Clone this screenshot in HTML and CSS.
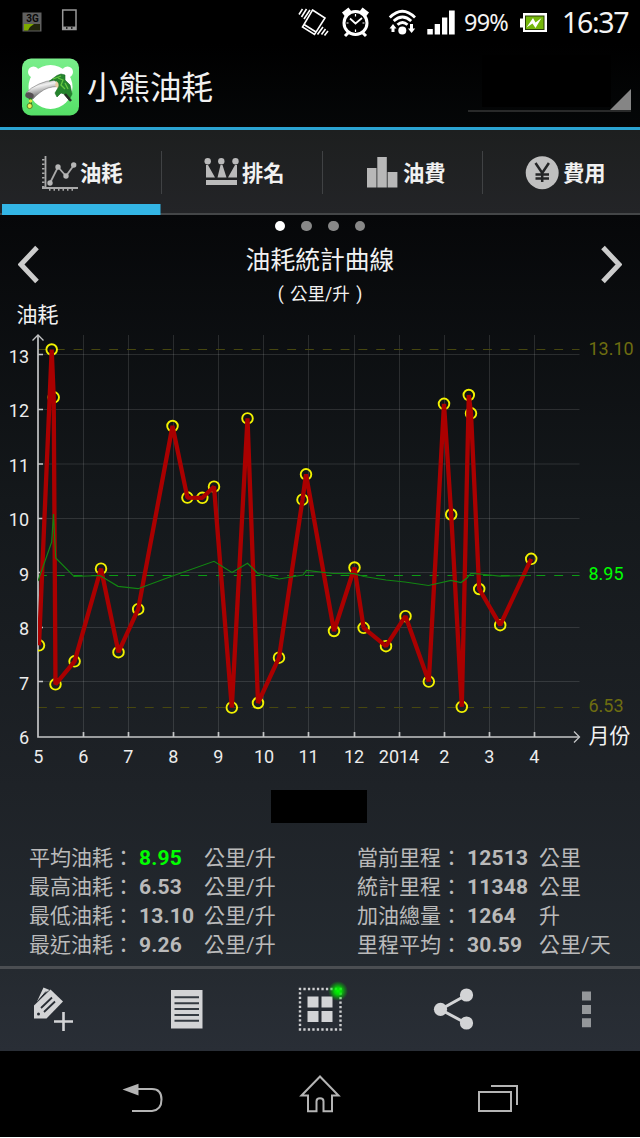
FILE: index.html
```html
<!DOCTYPE html>
<html lang="zh-Hant">
<head>
<meta charset="utf-8">
<title>小熊油耗</title>
<link rel="stylesheet" href="styles.css">
</head>
<body>
<div class="phone">
  <header class="status">
    <svg class="status-left" width="80" height="44" viewBox="0 0 80 44">
      <rect x="22.500" y="12.500" width="19" height="19" fill="#606060"/>
      <rect x="24" y="24" width="16" height="6.500" fill="#20240c"/>
      <path d="M24 24h10l-4 3-2 3.500h-4z" fill="#7da800"/>
      <text x="32.500" y="22" class="tiny">3G</text>
      <rect x="62.700" y="10" width="13.300" height="19.500" fill="none" stroke="#989898" stroke-width="1.500"/>
      <path d="M62.700 27.800h13.300" stroke="#989898" stroke-width="2.500"/>
      <path d="M66 28h1.500M71 28h1.500" stroke="#000" stroke-width="1.500"/>
    </svg>
    <div class="status-right">
      <svg width="158" height="44" viewBox="298 0 158 44">
        <g fill="none" stroke="#fff" stroke-width="1.600">
          <path d="M312.500 10 325 18 314.500 34.500 302.500 27zM304 24.500 316 32"/>
          <path d="M299 14.500 302.500 9M301.500 17 306.500 9M304 19 310 10M317.500 34.500 323 27M321.500 34.500 325.500 29M324.500 35.500 328 31"/>
        </g>
        <g fill="none" stroke="#fff">
          <circle cx="355.500" cy="23" r="11.500" stroke-width="3"/>
          <path d="M343.500 14.500 350 9.500M367.500 14.500 361 9.500" stroke-width="5"/>
          <path d="m348 33-3 3M363 33l3 3" stroke-width="3"/>
          <path d="M350 18.500l5.500 5 6.500-5.500" stroke-width="1.700"/>
          <path d="M355.500 14v2.500M355.500 29.500V32M346.500 23h2M362.500 23h2" stroke-width="1.200"/>
        </g>
        <g fill="none" stroke="#fff" stroke-width="2.800">
          <path d="M389.800 17.500q12.500-12.500 25.200 0M393.700 21q8.700-8 17.500 0M397.500 24.800q5-4.500 10 0"/>
        </g>
        <g fill="#fff">
          <circle cx="402.300" cy="30.500" r="4"/>
          <path d="M389.500 28.500 393 24l3.500 4.500h-2V32h-3v-3.500zM408 28.500h2V24h3v4.500h2.200l-3.600 4.500z"/>
          <path d="M427.300 29h5.500v5.500h-5.500zM434.700 24h5.300v10.500h-5.300zM442 17.500h5.300v17H442zM449 10.500h5.700v24H449z"/>
        </g>
      </svg>
      <span class="percent">99%</span>
      <svg width="28" height="44" viewBox="520 0 28 44">
        <path d="M523 13h24v19h-24v-4.500h-3v-9h3z" fill="#fff"/>
        <rect x="525" y="15.500" width="19.500" height="14.500" fill="#283d05"/>
        <path d="M526 16.500h17.500v12.500H526z" fill="#75b70b"/>
        <path d="m526.500 27.500 6.500-9.500 2.500 4.500 6-4.500-6 10-3-4.500z" fill="#fff"/>
      </svg>
      <span class="clock">16:37</span>
    </div>
  </header>

  <div class="appbar">
    <svg class="logo" width="58" height="58" viewBox="22 58 58 58">
      <defs>
        <linearGradient id="steel" x1="0" y1="0" x2=".35" y2="1"><stop offset="0" stop-color="#777"/><stop offset=".4" stop-color="#f0f0f0"/><stop offset="1" stop-color="#555"/></linearGradient>
        <linearGradient id="lime" x1="0" y1="0" x2="0" y2="1"><stop offset="0" stop-color="#7aee8b"/><stop offset="1" stop-color="#55df67"/></linearGradient>
      </defs>
      <rect x="22" y="58.500" width="57" height="57" rx="9" fill="url(#lime)"/>
      <g fill="#fff"><circle cx="50.500" cy="87" r="22"/><circle cx="33.500" cy="72" r="5.500"/><circle cx="67.500" cy="72" r="5.500"/></g>
      <path d="M26 93q4-5 13-9 7-3.500 17-4l2 6.500q-11 0-18 6-4 3-7 6.500-3 1-5-1-2-2-2-5z" fill="url(#steel)" stroke="#777" stroke-width=".6"/>
      <ellipse cx="29.500" cy="95.500" rx="4.300" ry="3" fill="#554f52" transform="rotate(15 29.500 95.500)"/>
      <path d="M49.500 81 57 75.500l4-1.500 4 1v5l5 5 2 9-3 6-5-6-3-1-4 4-2-4 3-5-1-6-3-2z" fill="#25842d" stroke="#166b20" stroke-width=".6"/>
      <path d="M58 78l5 2-2 5 4 4M53 79l8-3M65 83l3 6" stroke="#66c842" stroke-width="1.300" fill="none"/>
      <path d="M56 81q4 2 2 7l-3-2z" fill="#e8cda5"/>
      <path d="m65 94 6 7" stroke="#292e26" stroke-width="2.500"/>
      <path d="M30.500 98v7" stroke="#287728" stroke-width="3"/>
      <circle cx="30.500" cy="101" r="1.800" fill="#dce640"/><circle cx="29.700" cy="106" r="2.600" fill="#eded55" stroke="#588527"/>
    </svg>
    <h1>小熊油耗</h1>
    <div class="spinner">
      <div class="spinner-mask"></div>
      <svg class="spinner-corner" width="21" height="21"><path d="M21 0v21H0z" fill="#858585"/></svg>
    </div>
  </div>

  <nav class="tabs">
    <a class="tab active">
      <svg width="37" height="40" viewBox="41 152 37 40">
        <g fill="none" stroke="#a9a9a9">
          <path d="M45.500 155v33M42 187h36" stroke-width="1.800"/>
          <path d="M43.300 158v29" stroke-width="2.500" stroke-dasharray="1.500 3"/>
          <path d="M49 188.500h25" stroke-width="2.500" stroke-dasharray="1.500 3"/>
          <path d="m50 182 8-16 8 9 8-11" stroke-width="1.800"/>
        </g>
        <g fill="#b6b6b6"><circle cx="50" cy="182" r="2.700"/><circle cx="58" cy="166" r="2.700"/><circle cx="66" cy="175" r="2.700"/><circle cx="73.700" cy="164" r="2.700"/></g>
      </svg><span>油耗</span>
    </a>
    <a class="tab">
      <svg width="37" height="40" viewBox="202 154 37 40">
        <g fill="#bababa"><circle cx="206.700" cy="162.300" r="3.200"/><circle cx="220.300" cy="162.300" r="3.200"/><circle cx="234.500" cy="162.300" r="3.200"/><path d="M205 166h2l7 12.500h-9zM219.500 166h2l4 12.500h-9zM234 166h2v12.500h-9zM205 181h31v5h-31z"/></g>
      </svg><span>排名</span>
    </a>
    <a class="tab">
      <svg width="37" height="40" viewBox="363 153 37 40">
        <g fill="#b8b8b8"><path d="M366 168h9.500v19.500H366zM376.300 157h9.500v30.500h-9.500zM386.600 172h9.800v15.500h-9.800z"/></g>
      </svg><span>油費</span>
    </a>
    <a class="tab">
      <svg width="37" height="40" viewBox="524 153 37 40">
        <circle cx="542.200" cy="172.700" r="16.500" fill="#c0c0c0"/>
        <path d="m535.500 163 6.700 10 6.700-10M542.200 172v10M535.500 174.500h13.500M535.500 178.500h13.500" fill="none" stroke="#242526" stroke-width="2.500"/>
      </svg><span>費用</span>
    </a>
  </nav>

  <main class="content">
    <div class="dots"><i class="dot on"></i><i class="dot"></i><i class="dot"></i><i class="dot"></i></div>
    <div class="chart-head">
      <svg width="22" height="40" viewBox="18 244 22 40"><path d="M37 247.500 21 264.500l16 17" fill="none" stroke="#ccc" stroke-width="5"/></svg>
      <div class="chart-title">
        <h2>油耗統計曲線</h2>
        <p>( 公里/升 )</p>
      </div>
      <svg width="22" height="40" viewBox="600 244 22 40"><path d="m603 247.500 16 17-16 17" fill="none" stroke="#ccc" stroke-width="5"/></svg>
    </div>

    <svg class="chart" width="640" height="480" viewBox="0 300 640 480">
      <defs><clipPath id="plot"><rect x="38" y="330" width="545" height="410"/></clipPath></defs>
      <text x="16.500" y="321.500" class="axis-name">油耗</text>
      <text x="588.500" y="742.500" class="axis-name">月份</text>
      <path class="grid" d="M38 354.500H579.500M38 409.500H579.500M38 464H579.500M38 518.500H579.500M38 572.500H579.500M38 627.500H579.500M38 681.500H579.500M83.500 335V737M128.500 335V737M173.500 335V737M218.500 335V737M263.500 335V737M308.500 335V737M354.500 335V737M399.500 335V737M444.500 335V737M489.500 335V737M534.500 335V737"/>
      <path class="limit" d="M38 349.500H579.500M38 707.500H579.500"/>
      <path class="mean" d="M38 575.500H579.500"/>
      <path class="axis" d="M38 336V737H579"/>
      <path class="arrow" d="m32.500 340.500 5.500-5.500 5.500 5.500M574 731.500l5.500 5.500-5.500 5.500"/>
      <path class="ticks" d="M38 354.500h5M38 409.500h5M38 464h5M38 518.500h5M38 572.500h5M38 627.500h5M38 681.500h5M83.500 732v5M128.500 732v5M173.500 732v5M218.500 732v5M263.500 732v5M308.500 732v5M354.500 732v5M399.500 732v5M444.500 732v5M489.500 732v5M534.500 732v5"/>
      <g clip-path="url(#plot)">
        <g class="marks">
          <circle cx="39" cy="645.300" r="5.300"/><circle cx="51.700" cy="349.500" r="5.300"/><circle cx="53.700" cy="397.300" r="5.300"/><circle cx="55.500" cy="684.300" r="5.300"/><circle cx="74.600" cy="661.300" r="5.300"/><circle cx="101" cy="568.700" r="5.300"/><circle cx="118.500" cy="652.200" r="5.300"/><circle cx="138.200" cy="609.200" r="5.300"/><circle cx="172.500" cy="426" r="5.300"/><circle cx="187.400" cy="497.600" r="5.300"/><circle cx="202.300" cy="497.800" r="5.300"/><circle cx="214" cy="486.700" r="5.300"/><circle cx="231.800" cy="707.600" r="5.300"/><circle cx="247.500" cy="418.400" r="5.300"/><circle cx="258" cy="703" r="5.300"/><circle cx="279" cy="657.700" r="5.300"/><circle cx="302.500" cy="499.700" r="5.300"/><circle cx="306" cy="474.300" r="5.300"/><circle cx="334" cy="631" r="5.300"/><circle cx="354.500" cy="567.500" r="5.300"/><circle cx="363.600" cy="627.800" r="5.300"/><circle cx="386" cy="646.200" r="5.300"/><circle cx="405.500" cy="616.200" r="5.300"/><circle cx="428.800" cy="681.600" r="5.300"/><circle cx="444" cy="403.800" r="5.300"/><circle cx="451.200" cy="514.500" r="5.300"/><circle cx="461.800" cy="706.800" r="5.300"/><circle cx="468.800" cy="395" r="5.300"/><circle cx="471" cy="413.300" r="5.300"/><circle cx="479.200" cy="589" r="5.300"/><circle cx="500.200" cy="625.200" r="5.300"/><circle cx="531.200" cy="558.800" r="5.300"/>
        </g>
        <polyline class="fuel" points="39,645.300 51.700,349.500 53.700,397.300 55.500,684.300 74.600,661.300 101,568.700 118.500,652.200 138.200,609.200 172.500,426 187.400,497.600 202.300,497.800 214,486.700 231.800,707.600 247.500,418.400 258,703 279,657.700 302.500,499.700 306,474.300 334,631 354.500,567.500 363.600,627.800 386,646.200 405.500,616.200 428.800,681.600 444,403.800 451.200,514.500 461.800,706.800 468.800,395 471,413.300 479.200,589 500.200,625.200 531.200,558.800"/>
        <polyline class="trend" points="38,581 51.700,542 53.500,514 55.700,558 74,576.500 100,575.500 118,586.300 138,588.700 172.500,576 214,561.300 232,572.500 247.500,563.300 258,573.500 279,579 303,575 306.500,570.300 333,573.500 354,573.700 364,576.500 386,580 405,582 428.500,585.500 451,580.300 461,582.500 467,578 471,573.300 480,574 500,576.200 531,575.500"/>
      </g>
      <g class="scale">
        <text x="29" y="362.500">13</text><text x="29" y="417">12</text><text x="29" y="471.500">11</text><text x="29" y="526">10</text><text x="29" y="580.500">9</text><text x="29" y="635">8</text><text x="29" y="689.500">7</text><text x="29" y="744">6</text>
      </g>
      <g class="months">
        <text x="38.300" y="763">5</text><text x="83.300" y="763">6</text><text x="128.300" y="763">7</text><text x="173.300" y="763">8</text><text x="218.300" y="763">9</text><text x="264" y="763">10</text><text x="308.500" y="763">11</text><text x="354" y="763">12</text><text x="399" y="763">2014</text><text x="444.300" y="763">2</text><text x="489.300" y="763">3</text><text x="534.300" y="763">4</text>
      </g>
      <text x="588.500" y="354.500" class="edge">13.10</text>
      <text x="588.500" y="580" class="edge avg">8.95</text>
      <text x="588.500" y="712" class="edge">6.53</text>
    </svg>

    <div class="mask"></div>

    <section class="stats">
      <dl>
        <dt>平均油耗：</dt><dd class="good">8.95</dd><dd class="unit">公里/升</dd>
        <dt>最高油耗：</dt><dd>6.53</dd><dd class="unit">公里/升</dd>
        <dt>最低油耗：</dt><dd>13.10</dd><dd class="unit">公里/升</dd>
        <dt>最近油耗：</dt><dd>9.26</dd><dd class="unit">公里/升</dd>
      </dl>
      <dl class="wide">
        <dt>當前里程：</dt><dd>12513</dd><dd class="unit">公里</dd>
        <dt>統計里程：</dt><dd>11348</dd><dd class="unit">公里</dd>
        <dt>加油總量：</dt><dd>1264</dd><dd class="unit">升</dd>
        <dt>里程平均：</dt><dd>30.59</dd><dd class="unit">公里/天</dd>
      </dl>
    </section>
  </main>

  <nav class="toolbar">
    <svg width="106" height="82" viewBox="0 969 106 82">
      <path d="M37 1001.500 43.500 987.500l6 2.500-5 3.500-7 7.500z" fill="#d3d4d6"/>
      <path d="M38 1001 46 991.500" stroke="#282d34" stroke-width="1"/>
      <path d="M34 1005.500 50.500 989.500 63 1001.500 46.500 1018.500H34z" fill="#d3d4d6"/>
      <path d="m41 1008 11-10.500M44 1012l11-10.500" stroke="#282d34" stroke-width="1.800"/>
      <circle cx="38.500" cy="1014" r="1.500" fill="#282d34"/>
      <path d="M54 1021.500h19M63.500 1012v19" stroke="#d3d4d6" stroke-width="2.600"/>
    </svg>
    <svg width="160" height="82" viewBox="106 969 160 82">
      <path d="M171 990h31.500v38.500H171z" fill="#d3d4d6"/>
      <path d="M174.500 997.300h24.500M174.500 1003.200h24.500M174.500 1009.100h24.500M174.500 1015h24.500M174.500 1020.800h24.500" stroke="#343a41" stroke-width="2"/>
    </svg>
    <svg width="120" height="82" viewBox="266 969 120 82">
      <defs><radialGradient id="glow"><stop offset="0" stop-color="#0f0"/><stop offset=".35" stop-color="#00f000" stop-opacity=".85"/><stop offset="1" stop-color="#0c0" stop-opacity="0"/></radialGradient></defs>
      <rect x="300" y="989" width="40.500" height="40.500" fill="none" stroke="#cfd0d2" stroke-width="2.400" stroke-dasharray="2.300 2.200" stroke-dashoffset="1.100"/>
      <path d="M307.500 996.500h11v11h-11zM321.500 996.500h11v11h-11zM307.500 1011h11v11h-11zM321.500 1011h11v11h-11z" fill="#d3d4d6"/>
      <circle cx="338" cy="991" r="10" fill="url(#glow)"/>
    </svg>
    <svg width="134" height="82" viewBox="386 969 134 82">
      <path d="m466.500 995-26 14.500 26 14" fill="none" stroke="#d3d4d6" stroke-width="3"/>
      <g fill="#d3d4d6"><circle cx="466.500" cy="995" r="6.600"/><circle cx="440.500" cy="1009.300" r="6.600"/><circle cx="466.500" cy="1023" r="6.600"/></g>
    </svg>
    <svg width="120" height="82" viewBox="520 969 120 82"><path d="M582 991.500h9v9h-9zM582 1005h9v9h-9zM582 1018.200h9v9h-9z" fill="#94979a"/></svg>
  </nav>

  <footer class="navbar">
    <svg width="214" height="86" viewBox="0 1051 214 86">
      <path d="M138 1089h14q9.500 0 9.500 10.500t-9.500 11.500h-20" fill="none" stroke="#b4b4b4" stroke-width="2"/>
      <path d="m122.500 1089.500 16-5.700v11.700z" fill="#b4b4b4"/>
    </svg>
    <svg width="212" height="86" viewBox="214 1051 212 86">
      <path d="M301.500 1095.500 320 1076.500l18.500 19h-6.500v15.700h-8.500v-10q0-3-3.500-3t-3.500 3v10H308v-15.700z" fill="none" stroke="#b4b4b4" stroke-width="2"/>
    </svg>
    <svg width="214" height="86" viewBox="426 1051 214 86">
      <path d="M479 1092h32v19h-32zM491 1086h26v19" fill="none" stroke="#b4b4b4" stroke-width="2"/>
    </svg>
  </footer>
</div>
</body>
</html>
```

FILE: styles.css
```css
* { box-sizing: border-box; }
body, h1, h2, p, dl, dd { margin: 0; }
body {
  background: #fff;
  color: #f1f1f1;
  font-family: Roboto, "Noto Sans CJK TC", sans-serif;
}
svg { display: block; flex: none; }
.phone { width: 640px; height: 1137px; display: flex; flex-direction: column; background: #000; overflow: hidden; }

.status { height: 44px; display: flex; justify-content: space-between; padding-right: 9px; background: #000; }
.status-right { display: flex; align-items: center; font-family: "Noto Sans", sans-serif; color: #f4f4f4; white-space: nowrap; }
.percent { width: 64px; padding-left: 8px; font-size: 23.500px; line-height: 44px; letter-spacing: -.8px; }
.clock { width: 69px; margin-left: 14px; font-size: 28.500px; line-height: 46px; letter-spacing: -1.300px; }
.tiny { font: bold 10px Roboto, sans-serif; fill: #080808; text-anchor: middle; }

.appbar { height: 86px; display: flex; align-items: center; padding: 3px 9px 0 22px; background: linear-gradient(#000, #050708); border-bottom: 3px solid #2ba4d2; }
.appbar h1 { margin-left: 7px; padding-top: 4px; flex: 1; font-size: 31.500px; line-height: 44px; font-weight: 400; }
.spinner { width: 163px; height: 56px; margin-bottom: 6px; border-bottom: 2px solid #292a2a; display: flex; align-items: flex-end; justify-content: flex-end; }
.spinner-mask { width: 129px; height: 52px; margin-bottom: 3px; background: #000; }
.spinner-corner { margin-left: -1px; }

.tabs { height: 85px; display: grid; grid-template-columns: 162px 161px 160px 157px; background: linear-gradient(#1d1f1f, #232427); border-bottom: 2px solid #444648; }
.tab { display: flex; align-items: flex-start; padding: 23px 0 0 41px; font-size: 21.300px; font-weight: 700; line-height: 42px; background: linear-gradient(#404244, #404244) 100% 21px / 1px 43px no-repeat; white-space: nowrap; }
.tab:last-child { background: none; }
.tab span { margin-left: 2px; }
.tab.active { background: linear-gradient(#33b5e5, #33b5e5) 2px 100% / 158.500px 11px no-repeat, linear-gradient(#404244, #404244) 100% 21px / 1px 43px no-repeat; margin-bottom: -2px; }

.content { height: 751px; display: flex; flex-direction: column; background: linear-gradient(#060709, #14181b 38%, #1e2227 76%, #242a30); }
.dots { height: 22px; display: flex; justify-content: center; align-items: center; gap: 16px; }
.dot { width: 10.700px; height: 10.700px; border-radius: 50%; background: #888; }
.dot.on { background: #fff; }
.chart-head { height: 63px; display: flex; justify-content: space-between; padding: 7px 18px 0; }
.chart-title { text-align: center; padding-top: 1px; }
.chart-title h2 { font-size: 24.800px; line-height: 32px; font-weight: 400; }
.chart-title p { font-size: 17.500px; line-height: 24px; margin-top: 5px; word-spacing: 2px; }
.chart { font-family: Roboto, sans-serif; font-size: 18px; fill: #ececec; overflow: visible; }
.axis-name { font: 21px "Noto Sans CJK TC", sans-serif; fill: #f1f1f1; }
.grid { stroke: #fff; stroke-opacity: .12; stroke-width: 1; }
.limit, .mean { stroke-dasharray: 8.900 8.900; stroke-width: 1; stroke: #47470f; }
.mean { stroke: #0c9c14; }
.axis, .arrow, .ticks { fill: none; stroke: #c4c5c6; stroke-width: 1.700; }
.arrow { stroke-width: 1.300; }
.marks { fill: none; stroke: #f2f200; stroke-width: 1.900; }
.fuel { fill: none; stroke: #aa0000; stroke-width: 4.300; stroke-linejoin: bevel; }
.trend { fill: none; stroke: #128512; stroke-width: 1.200; }
.scale { text-anchor: end; }
.months { text-anchor: middle; }
.edge { fill: #6e6d10; }
.edge.avg { fill: #0f0; }
.mask { width: 96px; height: 33px; margin: 10px 0 0 271px; background: #000; }
.stats { display: flex; margin-top: 21px; padding-left: 29px; color: #bababa; font-size: 21px; line-height: 29px; }
.stats dl { width: 328px; display: grid; grid-template-columns: 110px 65px 1fr; grid-auto-rows: 29px; white-space: nowrap; }
.stats dl.wide { width: 283px; grid-template-columns: 110px 72px 1fr; }
.stats dd { font-weight: 700; letter-spacing: .2px; }
.stats .unit { font-weight: 400; letter-spacing: 0; }
.stats .good { color: #0f0; }

.toolbar { height: 85px; display: flex; border-top: 3px solid #4b4e52; background: linear-gradient(#252a30, #292e36); }
.navbar { height: 86px; display: flex; background: #000; }
```
